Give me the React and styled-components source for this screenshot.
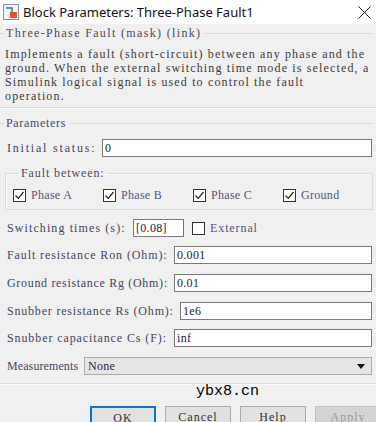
import styled, { createGlobalStyle } from "styled-components";

const GlobalStyle = createGlobalStyle`
  html, body {
    margin: 0;
    padding: 0;
    background: #f0f0f0;
  }
`;

const serif = `"Liberation Serif", "DejaVu Serif", serif`;

const Window = styled.div`
  position: relative;
  width: 376px;
  height: 422px;
  overflow: hidden;
  background: #f0f0f0;
  font-family: ${serif};
  font-size: 12px;
  letter-spacing: 0.6px;
  color: #404048;
`;

const TitleBar = styled.div`
  height: 24px;
  background: #fff;
  display: flex;
  align-items: center;
  padding-left: 3px;
`;

const TitleText = styled.span`
  margin-left: 4px;
  font-family: "Noto Sans", "Open Sans", sans-serif;
  font-size: 13px;
  letter-spacing: 0;
  color: #111;
  flex: 1;
`;

const CloseButton = styled.div`
  width: 24px;
  height: 24px;
  display: flex;
  align-items: center;
  justify-content: center;
`;

const Body = styled.div`
  padding: 2px 4px 0 5px;
  display: flex;
  flex-direction: column;
`;

const GroupHeader = styled.div`
  display: flex;
  align-items: center;
  height: 14px;
  margin-left: -5px;
  margin-top: ${p => p.$top || 0}px;

  &::before {
    content: "";
    width: 4px;
    border-top: 1px solid #d9d9d9;
  }

  &::after {
    content: "";
    flex: 1;
    border-top: 1px solid #d9d9d9;
    margin-left: 4px;
  }
`;

const GroupTitle = styled.span`
  padding-left: 2px;
  white-space: nowrap;
  letter-spacing: ${p => p.$ls}px;
  color: #4a4a5e;
`;

const Description = styled.p`
  margin: 7px 0 0;
  line-height: 14px;
  white-space: nowrap;
  letter-spacing: 1.15px;
  color: #3c3c3c;
`;

const Separator = styled.div`
  height: 0;
  border-top: 1px solid #dcdcdc;
  border-bottom: 1px solid #fafafa;
  margin: ${p => p.$top}px -4px 0 -5px;
`;

const Row = styled.div`
  display: flex;
  align-items: center;
  gap: ${p => p.$gap || 5}px;
  margin-top: ${p => p.$top}px;
  height: 18px;
`;

const Label = styled.span`
  box-sizing: border-box;
  width: ${p => p.$width}px;
  flex-shrink: 0;
  padding-left: 2px;
  white-space: nowrap;
  letter-spacing: ${p => p.$ls}px;
  color: #46465c;
`;

const TextInput = styled.div`
  box-sizing: border-box;
  height: 18px;
  ${p => (p.$width ? `width: ${p.$width}px;` : "flex: 1;")}
  background: #fff;
  border: 1px solid #7a7a7a;
  padding-left: 2px;
  display: flex;
  align-items: center;
  letter-spacing: 0.3px;
  color: #1c1c3a;
`;

const SelectBox = styled.div`
  box-sizing: border-box;
  flex: 1;
  height: 18px;
  background: #e5e5e5;
  border: 1px solid #adadad;
  display: flex;
  align-items: center;
  justify-content: space-between;
  padding: 0 6px 0 3px;
  letter-spacing: 0.3px;
  color: #2a2a40;
`;

const Arrow = styled.span`
  width: 0;
  height: 0;
  border-left: 4px solid transparent;
  border-right: 4px solid transparent;
  border-top: 5px solid #111;
`;

const FaultBox = styled.fieldset`
  margin: 9px -1px 0 0;
  padding: 8px 0 7px 7px;
  border: 1px solid #dcdcdc;
  box-shadow: inset 1px 1px 0 #fafafa;
  min-width: 0;
`;

const Legend = styled.legend`
  padding: 0 3px;
  margin-left: 5px;
  line-height: 14px;
  letter-spacing: 0.9px;
  color: #4a4a5e;
`;

const CheckGrid = styled.div`
  display: grid;
  grid-template-columns: repeat(4, 90px);
  height: 14px;
  align-items: center;
`;

const CheckItem = styled.label`
  display: flex;
  align-items: center;
  gap: 5px;
  margin-left: ${p => p.$left || 0}px;
  letter-spacing: ${p => p.$ls ?? 0.3}px;
  color: #55557a;
`;

const Box = styled.span`
  box-sizing: border-box;
  width: 13px;
  height: 13px;
  border: 1px solid #333;
  background: #fff;
  display: flex;
  align-items: center;
  justify-content: center;
`;

const Footer = styled.div`
  display: flex;
  gap: 9px;
  margin: 21px -4px 0 85px;
`;

/* the window cuts the buttons off at their lower edge */
const Button = styled.div`
  box-sizing: border-box;
  width: 66px;
  height: 17px;
  padding-top: 3px;
  line-height: 14px;
  flex-shrink: 0;
  background: ${p => (p.$disabled ? "#d4d4d4" : "#e1e1e1")};
  border: ${p => (p.$primary ? "2px solid #0078d7" : "1px solid #adadad")};
  border-color: ${p => (p.$disabled ? "#c4c4c4" : undefined)};
  border-bottom: none;
  color: ${p => (p.$disabled ? "#9a9a9a" : "#333")};
  letter-spacing: 1px;
  text-align: center;
`;

const Watermark = styled.div`
  position: absolute;
  left: 196px;
  top: 383px;
  font-family: "Liberation Mono", "DejaVu Sans Mono", monospace;
  font-size: 15px;
  letter-spacing: 0;
  line-height: 18px;
  color: #000;
`;

function BlockIcon() {
  return (
    <svg width="16" height="16" viewBox="0 0 16 16">
      <rect x="0.5" y="0.5" width="15" height="15" fill="#f2f5fa" stroke="#7d94b4" />
      <path d="M3 4h6v4" fill="none" stroke="#3a6fb0" strokeWidth="1.5" />
      <rect x="7" y="8" width="7" height="6" fill="#e8521c" />
    </svg>
  );
}

function CloseIcon() {
  return (
    <svg width="13" height="13" viewBox="0 0 13 13">
      <path d="M0.5 0.5L12.5 12.5M12.5 0.5L0.5 12.5" stroke="#222" strokeWidth="1" />
    </svg>
  );
}

function Check({ checked }) {
  return (
    <Box>
      {checked && (
        <svg width="9" height="9" viewBox="0 0 9 9">
          <path d="M0.5 4.5L3.3 7.3L8.5 1" fill="none" stroke="#222" strokeWidth="1.2" />
        </svg>
      )}
    </Box>
  );
}

const phases = ["Phase A", "Phase B", "Phase C", "Ground"];

// ls spreads each label so it fills the width SimSun would give it
const params = [
  { label: "Fault resistance Ron (Ohm):", value: "0.001", top: 9, ls: 0.9 },
  { label: "Ground resistance Rg (Ohm):", value: "0.01", top: 10, ls: 0.68 },
  { label: "Snubber resistance Rs (Ohm):", value: "1e6", top: 10, ls: 0.8 },
  { label: "Snubber capacitance Cs (F):", value: "inf", top: 9, ls: 0.9 }
];

// SimSun latin glyphs are 6px wide, so label boxes follow the character count
const labelWidth = text => text.length * 6 + 2;

export default function App() {
  return (
    <>
      <GlobalStyle />
      <Window>
        <TitleBar>
          <BlockIcon />
          <TitleText>Block Parameters: Three-Phase Fault1</TitleText>
          <CloseButton>
            <CloseIcon />
          </CloseButton>
        </TitleBar>
        <Body>
          <GroupHeader>
            <GroupTitle $ls={1.35}>Three-Phase Fault (mask) (link)</GroupTitle>
          </GroupHeader>
          <Description>
            Implements a fault (short-circuit) between any phase and the
            <br />
            ground. When the external switching time mode is selected, a
            <br />
            Simulink logical signal is used to control the fault
            <br />
            operation.
          </Description>
          <Separator $top={4} />
          <GroupHeader $top={7}>
            <GroupTitle $ls={0.67}>Parameters</GroupTitle>
          </GroupHeader>
          <Row $top={9}>
            <Label $width={labelWidth("Initial status:")} $ls={1.8}>
              Initial status:
            </Label>
            <TextInput>0</TextInput>
          </Row>
          <FaultBox>
            <Legend>Fault between:</Legend>
            <CheckGrid>
              {phases.map(p => (
                <CheckItem key={p}>
                  <Check checked />
                  {p}
                </CheckItem>
              ))}
            </CheckGrid>
          </FaultBox>
          <Row $top={9} $gap={6}>
            <Label $width={labelWidth("Switching times (s):")} $ls={1.1}>
              Switching times (s):
            </Label>
            <TextInput $width={51}>[0.08]</TextInput>
            <CheckItem $left={2} $ls={0.9}>
              <Check />
              External
            </CheckItem>
          </Row>
          {params.map(p => (
            <Row key={p.label} $top={p.top}>
              <Label $width={labelWidth(p.label)} $ls={p.ls}>
                {p.label}
              </Label>
              <TextInput>{p.value}</TextInput>
            </Row>
          ))}
          <Row $top={10}>
            <Label $width={labelWidth("Measurements")} $ls={0.1}>
              Measurements
            </Label>
            <SelectBox>
              None
              <Arrow />
            </SelectBox>
          </Row>
          <Separator $top={8} />
          <Footer>
            <Button $primary>OK</Button>
            <Button>Cancel</Button>
            <Button>Help</Button>
            <Button $disabled>Apply</Button>
          </Footer>
        </Body>
        <Watermark>ybx8.cn</Watermark>
      </Window>
    </>
  );
}
